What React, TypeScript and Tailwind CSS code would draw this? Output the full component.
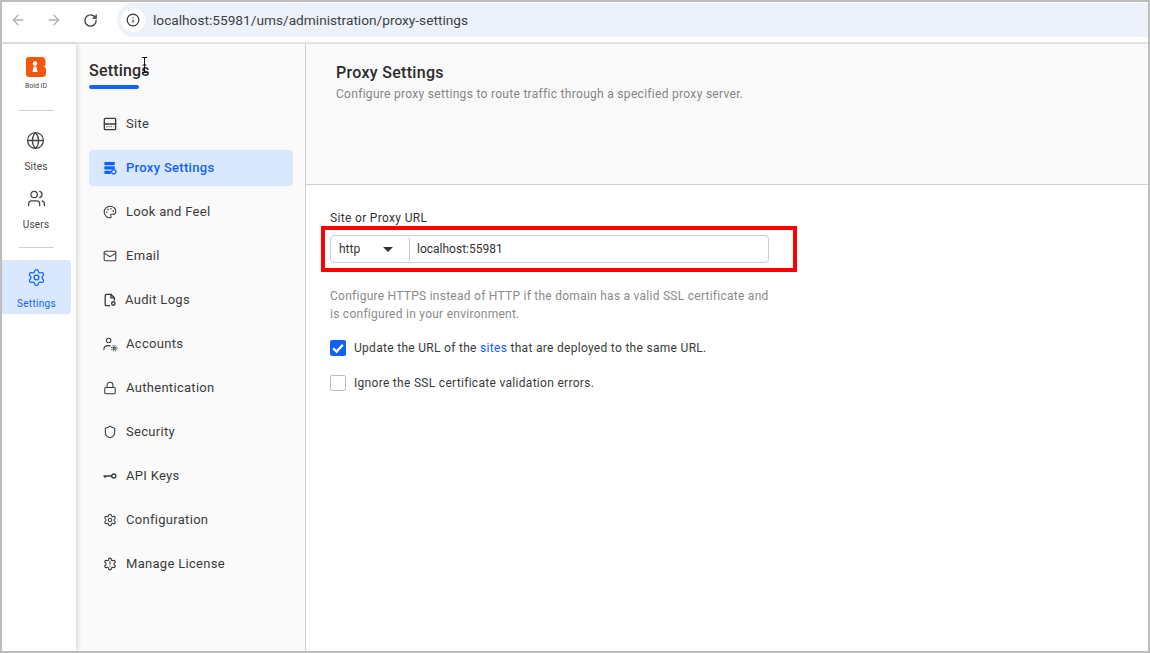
import React from "react";
import { ArrowLeft, ArrowRight, RotateCw, Info, Globe, Users, Settings, Mail, Lock, Shield, Palette } from "lucide-react";

const Ico = ({ children }: { children: React.ReactNode }) => (
  <svg viewBox="0 0 16 16" width="14" height="14" fill="none" stroke="currentColor" strokeWidth="1.5" strokeLinecap="round" strokeLinejoin="round">{children}</svg>
);

const SiteIcon = () => (
  <Ico>
    <rect x="1.500" y="1.500" width="13" height="13" rx="1" />
    <path d="M1.500 8h13" />
    <path d="M4 11h8" strokeDasharray="1 1.500" strokeLinecap="butt" />
  </Ico>
);
const ProxyIcon = () => (
  <svg viewBox="0 0 16 16" width="14" height="14" fill="currentColor">
    <rect x="1.500" y="1" width="12" height="3.800" rx="1" />
    <rect x="1.500" y="6" width="12" height="3.800" rx="1" />
    <rect x="1.500" y="11" width="7.500" height="3.800" rx="1" />
    <circle cx="12.300" cy="12.300" r="2.500" fill="none" stroke="currentColor" strokeWidth="1.400" />
  </svg>
);
const AuditIcon = () => (
  <Ico>
    <path d="M7.500 14.500H4a1.500 1.500 0 0 1-1.500-1.500V3A1.500 1.500 0 0 1 4 1.500h5L13 5.500v2.500" />
    <path d="M9 1.500v4h4" />
    <circle cx="11.800" cy="12" r="2" />
  </Ico>
);
const AccountIcon = () => (
  <svg viewBox="0 0 16 16" width="15" height="15" fill="none" stroke="currentColor" strokeWidth="1.100" strokeLinecap="round">
    <circle cx="6" cy="3.800" r="2.400" />
    <path d="M1 13.500v-.8C1 10.500 3 9.200 6 9.200c.8 0 1.400.1 2 .3" />
    <circle cx="12" cy="12" r="1.200" />
    <circle cx="12" cy="12" r="2.800" strokeDasharray="1.100 1.100" strokeWidth="1.600" strokeLinecap="butt" opacity="0.75" />
  </svg>
);
const KeyIcon = () => (
  <Ico>
    <circle cx="12.300" cy="8" r="2.300" />
    <path d="M10 8H1M2.500 8v1.800" />
  </Ico>
);
const LicenseIcon = () => (
  <span className="relative flex h-[14px] w-[14px] items-center justify-center">
    <svg viewBox="0 0 24 24" width="14" height="14" fill="none" stroke="currentColor" strokeWidth="2" strokeLinecap="round" strokeLinejoin="round">
      <path d="M12.220 2h-.44a2 2 0 0 0-2 2v.18a2 2 0 0 1-1 1.730l-.43.25a2 2 0 0 1-2 0l-.15-.08a2 2 0 0 0-2.730.73l-.22.380a2 2 0 0 0 .73 2.730l.15.1a2 2 0 0 1 1 1.720v.51a2 2 0 0 1-1 1.740l-.15.09a2 2 0 0 0-.73 2.730l.22.380a2 2 0 0 0 2.730.730l.15-.08a2 2 0 0 1 2 0l.43.250a2 2 0 0 1 1 1.730V20a2 2 0 0 0 2 2h.44a2 2 0 0 0 2-2v-.18a2 2 0 0 1 1-1.730l.43-.25a2 2 0 0 1 2 0l.15.08a2 2 0 0 0 2.730-.73l.22-.390a2 2 0 0 0-.73-2.730l-.15-.08a2 2 0 0 1-1-1.740v-.500a2 2 0 0 1 1-1.740l.15-.090a2 2 0 0 0 .73-2.730l-.22-.380a2 2 0 0 0-2.730-.730l-.15.08a2 2 0 0 1-2 0l-.43-.250a2 2 0 0 1-1-1.730V4a2 2 0 0 0-2-2z" />
      <path d="M12 8v4M12 15.500h.01" />
    </svg>
  </span>
);

const nav: { label: string; icon: React.ReactNode; active?: boolean; gap?: string }[] = [
  { label: "Site", icon: <SiteIcon /> },
  { label: "Proxy Settings", icon: <ProxyIcon />, active: true },
  { label: "Look and Feel", icon: <Palette size={14} strokeWidth={1.8} /> },
  { label: "Email", icon: <Mail size={14} strokeWidth={1.8} /> },
  { label: "Audit Logs", icon: <AuditIcon />, gap: "gap-[8px]" },
  { label: "Accounts", icon: <AccountIcon />, gap: "gap-[8px]" },
  { label: "Authentication", icon: <Lock size={14} strokeWidth={1.8} /> },
  { label: "Security", icon: <Shield size={14} strokeWidth={1.8} /> },
  { label: "API Keys", icon: <KeyIcon /> },
  { label: "Configuration", icon: <Settings size={14} strokeWidth={1.8} /> },
  { label: "Manage License", icon: <LicenseIcon /> },
];

export default function App() {
  return (
    <div className="relative flex h-[653px] w-[1150px] flex-col overflow-hidden border-2 border-[#bdbdbd] bg-white font-['Roboto',sans-serif] text-[#333]">
      {/* browser bar */}
      <div className="flex h-[42px] shrink-0 items-start border-b-2 border-[#e3e3e3] bg-white">
        <div className="flex h-[36px] items-center pl-[8px] text-[#b0b0b0]">
          <ArrowLeft size={16} strokeWidth={2} />
          <ArrowRight size={16} strokeWidth={2} className="ml-[20px]" />
          <RotateCw size={15} strokeWidth={2.200} className="ml-[21px] text-[#444]" />
        </div>
        <div className="ml-[19px] mt-[1px] flex h-[34px] flex-1 items-center rounded-l-full bg-[#edf2fa] pl-[4px]">
          <div className="flex h-[24px] w-[24px] items-center justify-center rounded-full bg-white">
            <Info size={14} strokeWidth={2} className="text-[#333]" />
          </div>
          <span className="ml-[8px] text-[13.7px] text-[#3c4043]">localhost:55981/ums/administration/proxy-settings</span>
        </div>
      </div>

      <div className="flex min-h-0 flex-1">
        {/* rail */}
        <div className="z-10 flex w-[74px] shrink-0 flex-col items-center bg-white shadow-[2px_0_4px_rgba(0,0,0,0.12)]">
          <div className="mr-[6px] mt-[13px] flex flex-col items-center">
            <svg viewBox="0 0 20 20" width="20" height="20">
              <path d="M3 0h13c2 0 3.500 1.500 3.500 3.500v3c0 1.200-.6 2.300-1.500 3 1 .7 2 1.800 2 3v4c0 2-1.500 3.500-3.500 3.500H3c-2 0-3-1-3-3V3C0 1 1 0 3 0z" fill="#f4560e" />
              <circle cx="9" cy="6.500" r="2.200" fill="#fff" />
              <path d="M7.500 9.500h3l1 5.500h-5z" fill="#fff" />
            </svg>
            <span className="mt-[5px] text-[7px] leading-[9px] text-[#444]">Bold ID</span>
          </div>
          <div className="mr-[6px] mt-[19px] h-px w-[35px] bg-[#d0d0d0]" />
          <div className="mr-[6px] mt-[20px] flex flex-col items-center text-[#444]">
            <Globe size={19} strokeWidth={1.600} />
            <span className="mt-[11px] text-[10px] leading-[12px] tracking-[0.2px]">Sites</span>
          </div>
          <div className="mr-[6px] mt-[16px] flex flex-col items-center text-[#444]">
            <Users size={19} strokeWidth={1.600} />
            <span className="mt-[11px] text-[10px] leading-[12px] tracking-[0.2px]">Users</span>
          </div>
          <div className="mr-[6px] mt-[16px] h-px w-[35px] bg-[#d0d0d0]" />
          <div className="mr-[5px] mt-[12px] flex h-[54px] w-[69px] flex-col items-center rounded-r-[4px] bg-[#dae8fd] pt-[8px] text-[#0f62fe]">
            <Settings size={19} strokeWidth={1.600} className="mr-[1px]" />
            <span className="mt-[11px] text-[10px] leading-[12px] tracking-[0.3px]">Settings</span>
          </div>
        </div>

        {/* sidebar */}
        <div className="flex w-[230px] shrink-0 flex-col border-r border-[#cfcfcf] bg-[#fafafa] pl-[13px] pr-[12px]">
          <div className="mt-[17px] text-[16px] font-medium leading-[20px] tracking-[0.2px] text-[#2b2b2b]">Settings</div>
          <div className="mt-[4px] h-[4px] w-[50px] rounded-full bg-[#0f62fe]" />
          <div className="mt-[17px] flex flex-col gap-[8px]">
            {nav.map((n) => (
              <div
                key={n.label}
                className={`flex h-[36px] items-center rounded-[4px] pl-[14px] text-[13px] tracking-[0.3px] ${n.gap ?? "gap-[9px]"} ${n.active ? "bg-[#dae8fd] font-medium text-[#0f62fe]" : "text-[#3a3a3a]"}`}
              >
                {n.icon}
                <span>{n.label}</span>
              </div>
            ))}
          </div>
        </div>

        {/* main */}
        <div className="flex min-w-0 flex-1 flex-col">
          <div className="h-[141px] shrink-0 border-b border-[#cfcfcf] bg-[#f9f9f9] pl-[30px] pt-[19px]">
            <div className="text-[16px] font-medium leading-[20px] tracking-[0.3px] text-[#2b2b2b]">Proxy Settings</div>
            <div className="mt-[4px] text-[12px] leading-[14px] tracking-[0.3px] text-[#858585]">Configure proxy settings to route traffic through a specified proxy server.</div>
          </div>
          <div className="pl-[24px] pt-[26px]">
            <div className="text-[12px] leading-[14px] tracking-[0.33px] text-[#333]">Site or Proxy URL</div>
            <div className="mt-[10px] flex h-[28px] w-[439px] rounded-[4px] border border-[#cfcfcf] bg-white text-[12px] text-[#333]">
              <div className="flex w-[79px] items-center justify-between rounded-[4px] border-r border-[#cfcfcf] pl-[8px] pr-[16px]">
                <span>http</span>
                <span className="h-0 w-0 border-x-[5px] border-t-[5px] border-x-transparent border-t-[#333]" />
              </div>
              <div className="flex items-center pl-[7px]">localhost:55981</div>
            </div>
            <div className="mt-[24px] w-[445px] text-[12px] leading-[18px] tracking-[0.26px] text-[#8a8a8a]">
              Configure HTTPS instead of HTTP if the domain has a valid SSL certificate and is configured in your environment.
            </div>
            <div className="mt-[17px] flex items-center gap-[8px] text-[12px] leading-[16px] tracking-[0.3px] text-[#3a3a3a]">
              <span className="flex h-[16px] w-[16px] items-center justify-center rounded-[2px] bg-[#0f62fe]">
                <svg viewBox="0 0 16 16" width="16" height="16" fill="none" stroke="#fff" strokeWidth="2.400">
                  <path d="M3.200 8.300 6.600 11.500 12.800 4.800" />
                </svg>
              </span>
              <span>Update the URL of the <span className="text-[#0f62fe]">sites</span> that are deployed to the same URL.</span>
            </div>
            <div className="mt-[19px] flex items-center gap-[8px] text-[12px] leading-[16px] tracking-[0.3px] text-[#3a3a3a]">
              <span className="h-[16px] w-[16px] rounded-[2px] border border-[#bdbdbd] bg-white" />
              <span>Ignore the SSL certificate validation errors.</span>
            </div>
          </div>
        </div>
      </div>

      {/* annotation and cursor, over the page */}
      <div className="absolute left-[319px] top-[224px] h-[46px] w-[476px] border-[4px] border-[#ff0000]" />
      <svg className="absolute left-[139px] top-[55px]" width="7" height="16" viewBox="0 0 7 16" fill="none" stroke="#111" strokeWidth="1">
        <path d="M1 .5h5M3.500.5v15M1 15.500h5M1.500 8h4" />
      </svg>
    </div>
  );
}
